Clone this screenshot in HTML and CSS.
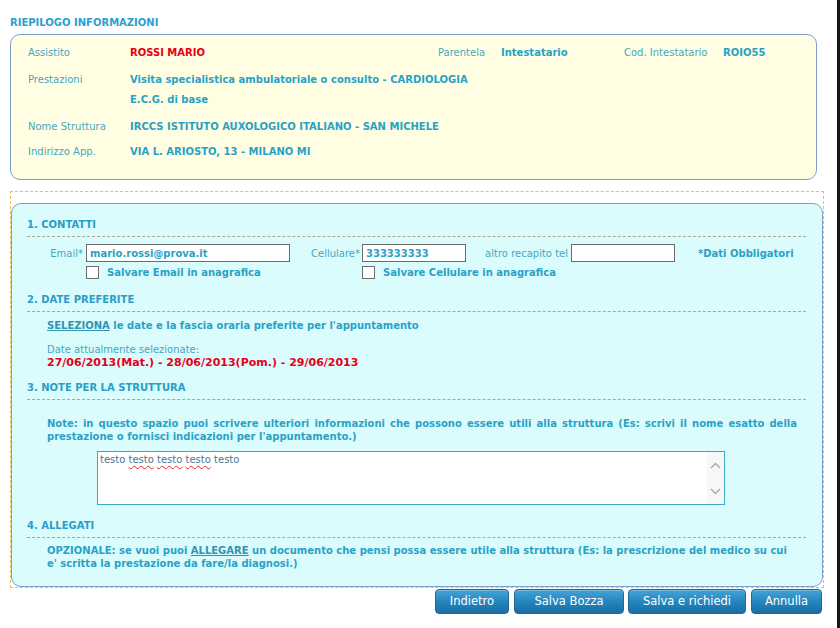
FILE: index.html
```html
<!DOCTYPE html>
<html lang="it">
<head>
<meta charset="utf-8">
<title>Riepilogo informazioni</title>
<link rel="stylesheet" href="styles.css">
</head>
<body>
<div class="frame">
  <h1 class="page-title">RIEPILOGO INFORMAZIONI</h1>

  <div class="summary">
    <div class="srow">
      <span class="slabel">Assistito</span>
      <span class="sval red w-assistito">ROSSI MARIO</span>
      <span class="slabel w-par">Parentela</span>
      <span class="sval w-int">Intestatario</span>
      <span class="slabel w-cod">Cod. Intestatario</span>
      <span class="sval">ROIO55</span>
    </div>
    <div class="srow">
      <span class="slabel">Prestazioni</span>
      <div class="sval">Visita specialistica ambulatoriale o consulto - CARDIOLOGIA<br>E.C.G. di base</div>
    </div>
    <div class="srow">
      <span class="slabel">Nome Struttura</span>
      <span class="sval">IRCCS ISTITUTO AUXOLOGICO ITALIANO - SAN MICHELE</span>
    </div>
    <div class="srow srow-last">
      <span class="slabel">Indirizzo App.</span>
      <span class="sval">VIA L. ARIOSTO, 13 - MILANO MI</span>
    </div>
  </div>

  <div class="dashed-wrap">
    <div class="form-box">
      <section class="sec sec-1">
        <h2 class="sec-title">1. CONTATTI</h2>
        <div class="contact-row">
          <label class="flabel w-email" for="email">Email*</label>
          <input class="field field-email" id="email" type="text" value="mario.rossi@prova.it">
          <label class="flabel w-cell" for="cell">Cellulare*</label>
          <input class="field field-short" id="cell" type="text" value="333333333">
          <label class="flabel w-altro" for="altro">altro recapito tel</label>
          <input class="field field-short" id="altro" type="text" value="">
          <span class="required">*Dati Obbligatori</span>
        </div>
        <div class="check-row">
          <label class="chk-group chk-first"><input type="checkbox" class="chk"><span>Salvare Email in anagrafica</span></label>
          <label class="chk-group"><input type="checkbox" class="chk"><span>Salvare Cellulare in anagrafica</span></label>
        </div>
      </section>

      <section class="sec sec-2">
        <h2 class="sec-title">2. DATE PREFERITE</h2>
        <p class="bold-text select-line"><a class="link" href="#">SELEZIONA</a> le date e la fascia oraria preferite per l'appuntamento</p>
        <div class="dates">
          <div class="dates-label">Date attualmente selezionate:</div>
          <div class="dates-value">27/06/2013(Mat.) - 28/06/2013(Pom.) - 29/06/2013</div>
        </div>
      </section>

      <section class="sec sec-3">
        <h2 class="sec-title">3. NOTE PER LA STRUTTURA</h2>
        <p class="bold-text para">Note: in questo spazio puoi scrivere ulteriori informazioni che possono essere utili alla struttura (Es: scrivi il nome esatto della prestazione o fornisci indicazioni per l'appuntamento.)</p>
        <div class="notes">
          <div class="notes-text">testo <span class="typo">testo</span> <span class="typo">testo</span> <span class="typo">testo</span> testo</div>
          <div class="notes-scroll">
            <svg width="11" height="7" viewBox="0 0 11 7"><path d="M1 6 L5.5 1.5 L10 6" fill="none" stroke="#a9a9a9" stroke-width="1.4"/></svg>
            <svg width="11" height="7" viewBox="0 0 11 7"><path d="M1 1 L5.5 5.5 L10 1" fill="none" stroke="#a9a9a9" stroke-width="1.4"/></svg>
          </div>
        </div>
      </section>

      <section class="sec sec-4">
        <h2 class="sec-title">4. ALLEGATI</h2>
        <p class="bold-text para para-4">OPZIONALE: se vuoi puoi <a class="link" href="#">ALLEGARE</a> un documento che pensi possa essere utile alla struttura (Es: la prescrizione del medico su cui e' scritta la prestazione da fare/la diagnosi.)</p>
      </section>
    </div>
  </div>

  <div class="actions">
    <button class="btn btn-back" type="button">Indietro</button>
    <button class="btn btn-draft" type="button">Salva Bozza</button>
    <button class="btn btn-send" type="button">Salva e richiedi</button>
    <button class="btn btn-cancel" type="button">Annulla</button>
  </div>
</div>
</body>
</html>
```

FILE: styles.css
```css
* { box-sizing: border-box; }
html, body { margin: 0; padding: 0; background: #fff; }
body {
  font-family: "DejaVu Sans", Verdana, sans-serif;
  font-size: 10px;
  color: #29a2c6;
}
.frame {
  width: 840px;
  height: 628px;
  border-right: 3px solid #161616;
  padding: 17px 0 0 10px;
  overflow: hidden;
}
.page-title {
  margin: 0 0 5px;
  font-size: 10px;
  line-height: 12px;
  font-weight: bold;
  color: #2c9ecf;
}

/* summary */
.summary {
  width: 807px;
  height: 146px;
  background: #fffee2;
  border: 1px solid #7f9dc9;
  border-radius: 10px;
  padding: 8px 0 0 17px;
}
.srow { display: flex; line-height: 20px; margin-bottom: 7px; }
.srow-last { margin-top: -2px; margin-bottom: 0; }
.slabel { width: 102px; flex: none; color: #46a6c0; font-weight: normal; }
.sval { font-weight: bold; color: #27a2c6; }
.red { color: #e8000e; }
.w-assistito { width: 308px; flex: none; }
.w-par { width: 63px; }
.w-int { width: 123px; flex: none; }
.w-cod { width: 99px; }

/* form container */
.dashed-wrap {
  margin-top: 11px;
  width: 814px;
  border: 1px dashed #e3c44c;
  padding-top: 11px;
}
.form-box {
  background: #dbfcfd;
  border: 1px solid #7f9dc9;
  border-radius: 10px;
  padding: 14px 16px 14px 15px;
  height: 384px;
}
.sec-title {
  margin: 0;
  font-size: 10px;
  line-height: 12px;
  font-weight: bold;
  color: #2a9dc7;
  padding-bottom: 5px;
  border-bottom: 1px dashed #aaa792;
}
.sec-1 { padding-top: 1px; }
.sec-2 { margin-top: 15px; }
.sec-3 { margin-top: 13px; }
.sec-4 { margin-top: 15px; }

.contact-row {
  display: flex;
  align-items: center;
  margin-top: 7px;
  height: 18px;
}
.flabel { color: #46a6c0; text-align: right; flex: none; }
.w-email { width: 56px; margin-right: 3px; }
.w-cell { width: 70px; margin-right: 2px; }
.w-altro { width: 102px; margin-right: 3px; }
.field {
  height: 18px;
  border: 1px solid #6b6b6b;
  background: #fff;
  padding: 0 3px;
  margin: 0;
  font-family: "DejaVu Sans", Verdana, sans-serif;
  font-size: 10px;
  font-weight: bold;
  color: #29a2c6;
  outline: none;
  flex: none;
}
.field-email { width: 204px; }
.field-short { width: 104px; }
.required { margin-left: 23px; font-weight: bold; }

.check-row {
  display: flex;
  margin-top: 4px;
  padding-left: 59px;
  height: 13px;
  line-height: 13px;
  font-weight: bold;
}
.chk-group { display: flex; align-items: center; }
.chk-first { width: 276px; flex: none; }
.chk {
  -webkit-appearance: none;
  appearance: none;
  width: 13px;
  height: 13px;
  margin: 0 8px 0 0;
  border: 1px solid #6e6e6e;
  background: #fff;
  flex: none;
}

.bold-text { font-weight: bold; margin: 0; }
.link { color: #2f93b6; text-decoration: underline; }
.select-line { margin-top: 8px; padding-left: 20px; line-height: 12px; }
.dates { margin-top: 11px; padding-left: 20px; line-height: 13px; }
.dates-label { color: #46a6c0; }
.dates-value { color: #e3001a; font-weight: bold; font-size: 11px; }

.para {
  margin-top: 17px;
  padding-left: 20px;
  padding-right: 9px;
  line-height: 13px;
  text-align: justify;
}
.para-4 { margin-top: 6px; text-align: left; }

.notes {
  display: flex;
  margin: 8px 0 0 70px;
  width: 628px;
  height: 54px;
  border: 1px solid #3aa9c4;
  background: #fff;
}
.notes-text {
  flex: 1;
  padding: 1px 2px;
  line-height: 13px;
  color: #4a7893;
}
.typo {
  text-decoration: underline wavy #e0282a;
  text-decoration-thickness: 1px;
  text-underline-offset: 2px;
}
.notes-scroll {
  width: 17px;
  background: #f7f7f7;
  display: flex;
  flex-direction: column;
  align-items: center;
  justify-content: space-between;
  padding: 10px 0 9px;
}

/* buttons */
.actions {
  display: flex;
  justify-content: flex-end;
  gap: 5px;
  width: 812px;
  margin-top: 1px;
}
.btn {
  height: 25px;
  padding: 0;
  border: 1px solid #1d6a9a;
  border-radius: 4px;
  background: linear-gradient(#45a3d6 0%, #2a8bc3 42%, #2282ba 58%, #196ea4 100%);
  color: #fff;
  font-family: "DejaVu Sans", Verdana, sans-serif;
  font-size: 11.5px;
  line-height: 23px;
  text-align: center;
  box-shadow: inset 0 1px 0 rgba(255,255,255,0.25);
}
.btn-back { width: 74px; }
.btn-draft { width: 110px; }
.btn-send { width: 118px; margin-left: -1px; }
.btn-cancel { width: 71px; }
```
